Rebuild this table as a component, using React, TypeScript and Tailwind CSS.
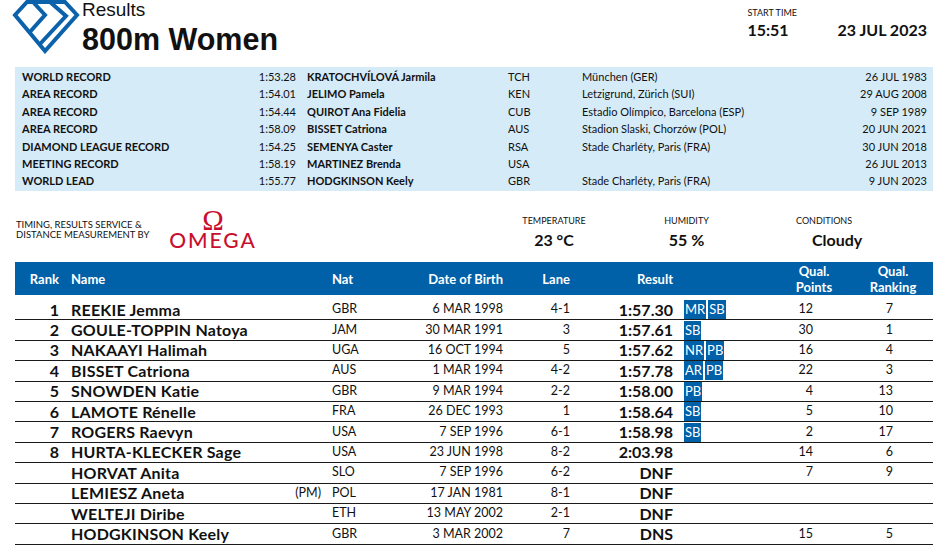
const records = [
  ["WORLD RECORD", "1:53.28", "KRATOCHVÍLOVÁ Jarmila", "TCH", "München (GER)", "26 JUL 1983"],
  ["AREA RECORD", "1:54.01", "JELIMO Pamela", "KEN", "Letzigrund, Zürich (SUI)", "29 AUG 2008"],
  ["AREA RECORD", "1:54.44", "QUIROT Ana Fidelia", "CUB", "Estadio Olímpico, Barcelona (ESP)", "9 SEP 1989"],
  ["AREA RECORD", "1:58.09", "BISSET Catriona", "AUS", "Stadion Slaski, Chorzów (POL)", "20 JUN 2021"],
  ["DIAMOND LEAGUE RECORD", "1:54.25", "SEMENYA Caster", "RSA", "Stade Charléty, Paris (FRA)", "30 JUN 2018"],
  ["MEETING RECORD", "1:58.19", "MARTINEZ Brenda", "USA", "", "26 JUL 2013"],
  ["WORLD LEAD", "1:55.77", "HODGKINSON Keely", "GBR", "Stade Charléty, Paris (FRA)", "9 JUN 2023"],
];

type Row = {
  rank: string;
  name: string;
  pm?: boolean;
  nat: string;
  dob: string;
  lane: string;
  result: string;
  badges: string[];
  points: string;
  ranking: string;
};

const rows: Row[] = [
  { rank: "1", name: "REEKIE Jemma", nat: "GBR", dob: "6 MAR 1998", lane: "4-1", result: "1:57.30", badges: ["MR", "SB"], points: "12", ranking: "7" },
  { rank: "2", name: "GOULE-TOPPIN Natoya", nat: "JAM", dob: "30 MAR 1991", lane: "3", result: "1:57.61", badges: ["SB"], points: "30", ranking: "1" },
  { rank: "3", name: "NAKAAYI Halimah", nat: "UGA", dob: "16 OCT 1994", lane: "5", result: "1:57.62", badges: ["NR", "PB"], points: "16", ranking: "4" },
  { rank: "4", name: "BISSET Catriona", nat: "AUS", dob: "1 MAR 1994", lane: "4-2", result: "1:57.78", badges: ["AR", "PB"], points: "22", ranking: "3" },
  { rank: "5", name: "SNOWDEN Katie", nat: "GBR", dob: "9 MAR 1994", lane: "2-2", result: "1:58.00", badges: ["PB"], points: "4", ranking: "13" },
  { rank: "6", name: "LAMOTE Rénelle", nat: "FRA", dob: "26 DEC 1993", lane: "1", result: "1:58.64", badges: ["SB"], points: "5", ranking: "10" },
  { rank: "7", name: "ROGERS Raevyn", nat: "USA", dob: "7 SEP 1996", lane: "6-1", result: "1:58.98", badges: ["SB"], points: "2", ranking: "17" },
  { rank: "8", name: "HURTA-KLECKER Sage", nat: "USA", dob: "23 JUN 1998", lane: "8-2", result: "2:03.98", badges: [], points: "14", ranking: "6" },
  { rank: "", name: "HORVAT Anita", nat: "SLO", dob: "7 SEP 1996", lane: "6-2", result: "DNF", badges: [], points: "7", ranking: "9" },
  { rank: "", name: "LEMIESZ Aneta", pm: true, nat: "POL", dob: "17 JAN 1981", lane: "8-1", result: "DNF", badges: [], points: "", ranking: "" },
  { rank: "", name: "WELTEJI Diribe", nat: "ETH", dob: "13 MAY 2002", lane: "2-1", result: "DNF", badges: [], points: "", ranking: "" },
  { rank: "", name: "HODGKINSON Keely", nat: "GBR", dob: "3 MAR 2002", lane: "7", result: "DNS", badges: [], points: "15", ranking: "5" },
];

function DiamondLogo() {
  return (
    <svg width="68" height="54" viewBox="0 0 68 54" fill="none" stroke="#0b62ab" strokeWidth="4" strokeLinejoin="miter" className="shrink-0">
      <path d="M15 2 L53 2 L65 15 L33 51 L3 15 Z" />
      <path d="M21 2 L33 15 L17 33" />
      <path d="M38 2 L54 16 L28 44" />
    </svg>
  );
}

export default function App() {
  return (
    <div className="w-[945px] h-[555px] bg-white overflow-hidden font-['Lato',sans-serif] text-[#111]">
      {/* Header */}
      <div className="h-[67px] flex items-start pl-[12px]">
        <DiamondLogo />
        <div className="ml-[2px] flex-1 font-['Liberation_Sans',Arial,sans-serif]">
          <div className="text-[19px] leading-[19px]">Results</div>
          <div className="mt-[5px] text-[30.5px] leading-[30px] font-bold">800m Women</div>
        </div>
        <div className="pt-[8px] pr-[18px]">
          <div className="text-[9px] leading-[10px]">START TIME</div>
          <div className="mt-[4.3px] flex text-[16px] leading-[16px] font-bold">
            <div className="w-[90px]">15:51</div>
            <div>23 JUL 2023</div>
          </div>
        </div>
      </div>

      {/* Records */}
      <div className="mx-[15px] w-[918px] h-[124px] bg-[#d5ebf8] pt-[1px] pl-[7px] pr-[6px] text-[11px]">
        {records.map((r, i) => (
          <div key={i} className="flex h-[17.4px] leading-[17.4px]">
            <div className="w-[214px] font-bold">{r[0]}</div>
            <div className="w-[60px] text-right">{r[1]}</div>
            <div className="w-[212px] pl-[11px] font-bold">{r[2]}</div>
            <div className="w-[74px]">{r[3]}</div>
            <div className="flex-1">{r[4]}</div>
            <div className="text-right">{r[5]}</div>
          </div>
        ))}
      </div>

      {/* Timing / weather */}
      <div className="h-[71px] flex items-start pl-[16px]">
        <div className="mt-[29px] w-[152px] text-[9.5px] leading-[10.3px]">
          TIMING, RESULTS SERVICE &amp;
          <br />
          DISTANCE MEASUREMENT BY
        </div>
        <div className="mt-[18px] w-[90px] flex flex-col items-center text-[#c8102e]">
          <div className="text-[29px] leading-[22px] font-['Liberation_Serif',serif]">Ω</div>
          <div className="mt-[0.4px] text-[21px] leading-[17px] tracking-[2px] font-medium">OMEGA</div>
        </div>
        <div className="mt-[25px] ml-[246px] w-[100px] text-center">
          <div className="text-[9px] leading-[10px]">TEMPERATURE</div>
          <div className="mt-[6.3px] text-[16px] leading-[16px] font-bold">23 °C</div>
        </div>
        <div className="mt-[25px] ml-[32.5px] w-[100px] text-center">
          <div className="text-[9px] leading-[10px]">HUMIDITY</div>
          <div className="mt-[6.3px] text-[16px] leading-[16px] font-bold">55 %</div>
        </div>
        <div className="mt-[25px] ml-[59.5px]">
          <div className="text-[9px] leading-[10px]">CONDITIONS</div>
          <div className="mt-[6.3px] pl-[16px] text-[16px] leading-[16px] font-bold">Cloudy</div>
        </div>
      </div>

      {/* Results table */}
      <div className="mx-[15px] w-[918px]">
        <div className="h-[33px] bg-[#0060a8] text-white text-[13px] font-bold flex items-center pt-[2px]">
          <div className="w-[44px] text-right">Rank</div>
          <div className="w-[264px] pl-[12px]">Name</div>
          <div className="w-[100px] pl-[9px]">Nat</div>
          <div className="w-[80px] text-right">Date of Birth</div>
          <div className="w-[67px] text-right">Lane</div>
          <div className="w-[103px] text-right">Result</div>
          <div className="w-[90px]" />
          <div className="w-[102px] text-center leading-[16px] -mt-[2px]">
            Qual.
            <br />
            Points
          </div>
          <div className="w-[56px] text-center leading-[16px] -mt-[2px]">
            Qual.
            <br />
            Ranking
          </div>
        </div>

        <div className="pt-[5px]">
          {rows.map((r, i) => (
            <div key={i} className="h-[20.4px] border-b border-[#1a1a1a] flex items-center">
              <div className="w-[44px] text-right text-[16px] font-bold">{r.rank}</div>
              <div className="w-[264px] pl-[12px] pr-[2px] flex items-center justify-between">
                <span className="text-[16px] font-bold tracking-[0.2px]">{r.name}</span>
                {r.pm && <span className="text-[12.5px]">(PM)</span>}
              </div>
              <div className="w-[100px] pl-[9px] text-[12.5px]">{r.nat}</div>
              <div className="w-[80px] text-right text-[12.5px]">{r.dob}</div>
              <div className="w-[67px] text-right text-[12.5px]">{r.lane}</div>
              <div className="w-[103px] text-right text-[16px] font-bold">{r.result}</div>
              <div className="w-[90px] pl-[11px] flex gap-[2px]">
                {r.badges.map((b) => (
                  <span key={b} className="h-[19px] px-[1px] bg-[#0060a8] text-white text-[13px] leading-[19px]">
                    {b}
                  </span>
                ))}
              </div>
              <div className="w-[50px] text-right text-[12.5px]">{r.points}</div>
              <div className="w-[80px] text-right text-[12.5px]">{r.ranking}</div>
            </div>
          ))}
        </div>
      </div>
    </div>
  );
}
